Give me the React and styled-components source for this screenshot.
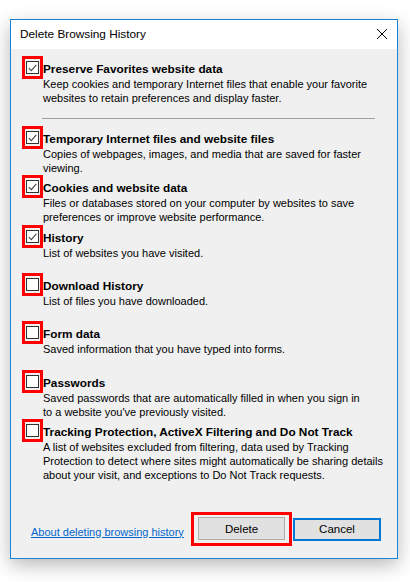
import React from 'react'
import styled, { createGlobalStyle } from 'styled-components'

const GlobalStyle = createGlobalStyle`
    html, body {
        margin: 0;
        padding: 0;
        background: #ffffff;
    }
    body {
        font-family: "Liberation Sans", Arial, sans-serif;
        font-size: 11px;
        color: #000;
    }
`

const Page = styled.div`
    width: 410px;
    height: 582px;
    padding: 19px 0 0 10px;
    box-sizing: border-box;
`

const Window = styled.div`
    width: 388px;
    height: 540px;
    box-sizing: border-box;
    border: 1px solid #1883d7;
    background: #f0f0f0;
    box-shadow: 0 6px 18px rgba(0, 0, 0, 0.28);
    display: flex;
    flex-direction: column;
`

const TitleBar = styled.div`
    height: 28px;
    flex: 0 0 auto;
    background: #ffffff;
    display: flex;
    align-items: center;
    justify-content: space-between;
    padding: 0 10px 1px 9px;
    font-size: 11.8px;
`

const CloseButton = styled.span`
    width: 10px;
    height: 10px;
    display: flex;
    svg {
        display: block;
    }
`

const Body = styled.div`
    flex: 1 1 auto;
    display: flex;
    flex-direction: column;
    padding: 12px 16px 12px 11px;
`

const Item = styled.div`
    display: flex;
    flex-direction: row;
    flex: 0 0 auto;
    height: ${(p) => p.$height || 49}px;
`

const Marker = styled.span`
    flex: 0 0 auto;
    width: 21px;
    height: 23px;
    margin-top: -5px;
    box-sizing: border-box;
    border: 3px solid #ff0000;
    padding: 2px 1px;
    display: flex;
    align-items: center;
    justify-content: center;
`

const Box = styled.span`
    width: 13px;
    height: 13px;
    box-sizing: border-box;
    border: 1px solid #333333;
    background: #ffffff;
    display: flex;
    align-items: center;
    justify-content: center;
`

const Texts = styled.div`
    flex: 1 1 auto;
    min-width: 0;
`

const Title = styled.div`
    font-weight: bold;
    font-size: 11.8px;
    line-height: 16px;
    white-space: nowrap;
`

const Line = styled.div`
    line-height: 14px;
    white-space: nowrap;
`

const Separator = styled.hr`
    border: 0;
    border-top: 1px solid #a0a0a0;
    margin: 0 6px 12px 20px;
    height: 0;
    flex: 0 0 auto;
`

const Footer = styled.div`
    margin-top: auto;
    display: flex;
    align-items: center;
`

const HelpLink = styled.a`
    color: #0066cc;
    text-decoration: underline;
    margin-left: 9px;
    margin-top: 5px;
    flex: 1 1 auto;
    white-space: nowrap;
`

const Highlight = styled.span`
    display: flex;
    flex: 0 0 auto;
    border: 3px solid #ff0000;
    padding: 2px 4px 3px 4px;
`

const Button = styled.button`
    flex: 0 0 auto;
    width: ${(p) => (p.$default ? 88 : 87)}px;
    height: 23px;
    box-sizing: border-box;
    font-family: inherit;
    font-size: 11.5px;
    color: #000;
    background: #e1e1e1;
    border: ${(p) => (p.$default ? '2px solid #0078d7' : '1px solid #adadad')};
    padding: 0;
    margin-left: ${(p) => (p.$default ? 1 : 0)}px;
`

const Check = () => (
    <svg width="9" height="8" viewBox="0 0 9 8">
        <path d="M0.8 4.2 L3.3 6.7 L8.3 0.9" fill="none" stroke="#444" strokeWidth="1.1" />
    </svg>
)

const items = [
    {
        title: 'Preserve Favorites website data',
        lines: [
            'Keep cookies and temporary Internet files that enable your favorite',
            'websites to retain preferences and display faster.',
        ],
        checked: true,
        height: 57,
    },
    {
        title: 'Temporary Internet files and website files',
        lines: ['Copies of webpages, images, and media that are saved for faster', 'viewing.'],
        checked: true,
        height: 49,
    },
    {
        title: 'Cookies and website data',
        lines: [
            'Files or databases stored on your computer by websites to save',
            'preferences or improve website performance.',
        ],
        checked: true,
        height: 50,
    },
    { title: 'History', lines: ['List of websites you have visited.'], checked: true, height: 48 },
    { title: 'Download History', lines: ['List of files you have downloaded.'], checked: false, height: 48 },
    { title: 'Form data', lines: ['Saved information that you have typed into forms.'], checked: false, height: 49 },
    {
        title: 'Passwords',
        lines: [
            'Saved passwords that are automatically filled in when you sign in',
            "to a website you've previously visited.",
        ],
        checked: false,
        height: 49,
    },
    {
        title: 'Tracking Protection, ActiveX Filtering and Do Not Track',
        lines: [
            'A list of websites excluded from filtering, data used by Tracking',
            'Protection to detect where sites might automatically be sharing details',
            'about your visit, and exceptions to Do Not Track requests.',
        ],
        checked: false,
        height: 60,
    },
]

const Option = ({ title, lines, checked, height }) => (
    <Item $height={height}>
        <Marker>
            <Box>{checked && <Check />}</Box>
        </Marker>
        <Texts>
            <Title>{title}</Title>
            {lines.map((line) => (
                <Line key={line}>{line}</Line>
            ))}
        </Texts>
    </Item>
)

export default function App() {
    const [first, ...rest] = items
    return (
        <Page>
            <GlobalStyle />
            <Window>
                <TitleBar>
                    <span>Delete Browsing History</span>
                    <CloseButton>
                        <svg width="10" height="10" viewBox="0 0 10 10">
                            <path d="M0 0 L10 10 M10 0 L0 10" stroke="#000" strokeWidth="1" />
                        </svg>
                    </CloseButton>
                </TitleBar>
                <Body>
                    <Option {...first} />
                    <Separator />
                    {rest.map((item) => (
                        <Option key={item.title} {...item} />
                    ))}
                    <Footer>
                        <HelpLink href="#">About deleting browsing history</HelpLink>
                        <Highlight>
                            <Button>Delete</Button>
                        </Highlight>
                        <Button $default>Cancel</Button>
                    </Footer>
                </Body>
            </Window>
        </Page>
    )
}
